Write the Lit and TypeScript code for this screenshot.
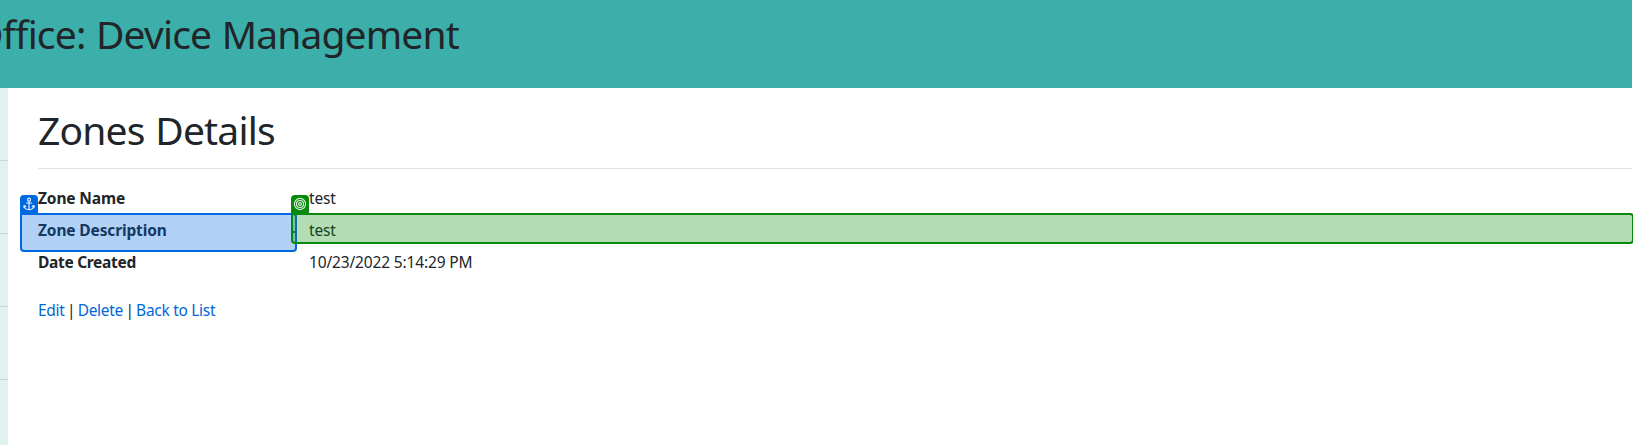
import { LitElement, html, css, svg } from "lit";
import { customElement } from "lit/decorators.js";

const anchorIcon = svg`<svg viewBox="0 0 18 18" width="18" height="18" fill="none" stroke="#e4f0ff" stroke-width="1.2" stroke-linecap="round" stroke-linejoin="round">
  <circle cx="9" cy="4.7" r="1.5"/><path d="M9 6.4V14.6M6.4 8H11.6M4.1 11C4.4 13.3 6.2 14.6 9 14.6S13.6 13.3 13.9 11M4 12.6V10.6L5.6 11.4M14 12.6V10.6L12.4 11.4"/></svg>`;
const targetIcon = svg`<svg viewBox="0 0 18 18" width="18" height="18" fill="none" stroke="#e0f2e0" stroke-width="1.1">
  <circle cx="9" cy="9" r="5.6"/><circle cx="9" cy="9" r="3.5"/><circle cx="9" cy="9" r="1.4"/></svg>`;

@customElement("app-root")
export class AppRoot extends LitElement {
  static styles = css`
    :host { display: block; width: 1633px; height: 445px; overflow: hidden; background: #fff; color: #212529;
      font: 15.5px/24px "Noto Sans", "Open Sans", sans-serif; }
    * { box-sizing: border-box; }
    h1 { margin: 0; font-size: 39px; line-height: 48px; font-weight: 400; white-space: nowrap; }
    .header { width: 1632px; height: 88px; background: #3cafab; padding-top: 10px; }
    .brand { width: 459px; display: flex; justify-content: flex-end; overflow: hidden; }
    .brand h1 { flex: none; letter-spacing: -0.85px; word-spacing: 1.2px; }
    .body { display: flex; height: 357px; }
    .side { width: 8px; background: #dff2f0; padding-top: 72px; }
    .line { height: 73px; border-top: 1px solid #c7dad8; }
    .main { width: 1624px; padding: 18px 0 0 30px; }
    .title { letter-spacing: -0.8px; word-spacing: 1.2px; }
    .rule { border-top: 1px solid #e2e2e2; margin: 14px 0 17px; }
    .fields { position: relative; display: grid; grid-template-columns: 271px 1fr; grid-auto-rows: 32px; margin: 0; }
    dt { font-weight: 700; letter-spacing: -0.14px; }
    .tight { letter-spacing: -0.3px; }
    dd { margin: 0; letter-spacing: -0.15px; }
    .links { margin-top: 16px; letter-spacing: -0.3px; }
    .sep { margin: 0 -1.3px; }
    a { color: #0366d6; text-decoration: none; }
    .mark { position: absolute; top: 27px; border: 2px solid; border-radius: 0 4px 4px 4px; }
    .anchor { left: -18px; width: 277px; height: 39px; color: #0068e0; background: #0068e04d; }
    .target { left: 253px; width: 1343px; height: 31px; color: #078a0b; background: #078a0b4d; }
    .tab { position: absolute; left: -2px; top: -20px; width: 18px; height: 18px; border-radius: 4px 4px 0 0; background: currentColor; }
    .tab svg { display: block; }
    .link { position: absolute; left: 0; top: 16px; width: 3px; height: 2px; background: #0870a0; }
  `;
  render() {
    return html`
      <div class="header"><div class="brand"><h1>Office: Device Management</h1></div></div>
      <div class="body">
        <div class="side">${[0, 1, 2, 3].map(() => html`<div class="line"></div>`)}</div>
        <div class="main">
          <h1 class="title">Zones Details</h1>
          <div class="rule"></div>
          <dl class="fields">
            <dt>Zone Name</dt><dd>test</dd>
            <dt>Zone Description</dt><dd>test</dd>
            <dt class="tight">Date Created</dt><dd>10/23/2022 5:14:29 PM</dd>
            <div class="mark anchor"><div class="tab">${anchorIcon}</div></div>
            <div class="mark target"><div class="tab">${targetIcon}</div><div class="link"></div></div>
          </dl>
          <div class="links"><a>Edit</a><span class="sep"> | </span><a>Delete</a><span class="sep"> | </span><a>Back to List</a></div>
        </div>
      </div>`;
  }
}
